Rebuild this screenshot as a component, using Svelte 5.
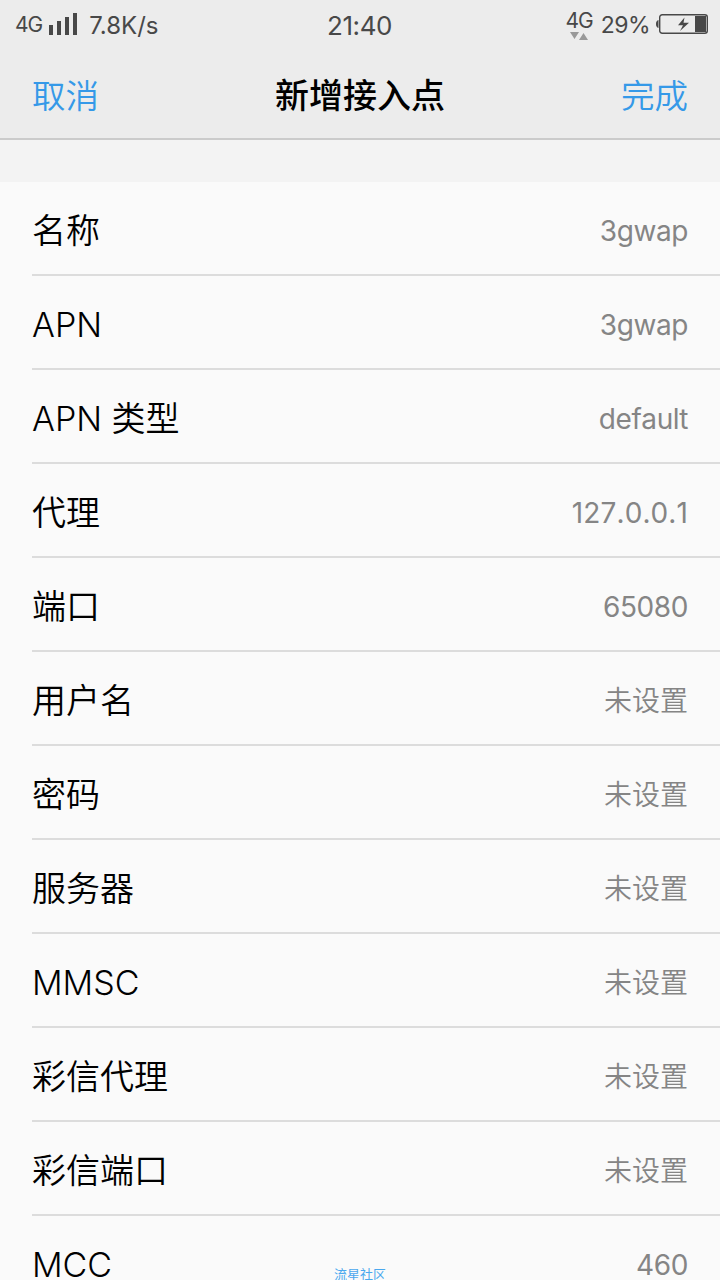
<script>
  const unset = '未设置';

  let rows = $state([
    { label: '名称', value: '3gwap' },
    { label: 'APN', value: '3gwap' },
    { label: 'APN 类型', value: 'default' },
    { label: '代理', value: '127.0.0.1', address: true },
    { label: '端口', value: '65080' },
    { label: '用户名', value: '' },
    { label: '密码', value: '' },
    { label: '服务器', value: '' },
    { label: 'MMSC', value: '' },
    { label: '彩信代理', value: '' },
    { label: '彩信端口', value: '' },
    { label: 'MCC', value: '460' }
  ]);
</script>

<div class="screen">
  <header>
    <div class="status">
      <div class="side">
        <span class="network">4G</span>
        <svg class="signal" width="28" height="22" viewBox="0 0 28 22">
          <rect x="0" y="12" width="4" height="10" />
          <rect x="8" y="8" width="4" height="14" />
          <rect x="16" y="4" width="4" height="18" />
          <rect x="24" y="0" width="4" height="22" />
        </svg>
        <span class="speed">7.8K/s</span>
      </div>
      <span class="clock">21:40</span>
      <div class="side right">
        <div class="data">
          <span class="network">4G</span>
          <svg width="18" height="8" viewBox="0 0 18 8">
            <path d="M0 0h9L4.500 7zM9 8h9L13.500 1z" />
          </svg>
        </div>
        <span class="percent">29%</span>
        <svg class="battery" width="52" height="20" viewBox="0 0 52 20">
          <path class="ink" d="M2.500 6v8C.7 13.500 0 12 0 10s.7-3.500 2.500-4z" />
          <rect class="case" x="3.700" y="0.700" width="47.600" height="18.600" rx="2.500" />
          <rect class="ink" x="39" y="2" width="11" height="16" />
          <path class="ink" d="M28.500 3.500L22 11.200h5L24 17l9-8.300h-5.500z" />
        </svg>
      </div>
    </div>
    <nav>
      <button>取消</button>
      <h1>新增接入点</h1>
      <button class="done">完成</button>
    </nav>
  </header>

  <ul>
    {#each rows as row}
      <li>
        <span class="label">{row.label}</span>
        <span class="value" class:address={row.address} class:unset={!row.value}>{row.value || unset}</span>
      </li>
    {/each}
  </ul>

  <span class="watermark">流星社区</span>
</div>

<style>
  :global(body) {
    background: #f3f3f3;
  }

  .screen {
    position: relative;
    width: 720px;
    height: 1280px;
    overflow: hidden;
    background: #f3f3f3;
    color: #000;
    font-family: Inter, 'Noto Sans CJK SC', sans-serif;
  }

  header {
    box-sizing: border-box;
    height: 140px;
    background: #ececec;
    border-bottom: 2px solid #cbcbcb;
  }

  .status {
    display: grid;
    grid-template-columns: 1fr auto 1fr;
    align-items: center;
    height: 50px;
    padding: 0 12px 0 15px;
    color: #484848;
    fill: #484848;
  }

  .side {
    display: flex;
    align-items: center;
  }

  .right {
    justify-content: flex-end;
  }

  .network {
    font-size: 21px;
    line-height: 22px;
    letter-spacing: -1px;
  }

  .signal {
    margin: -2px 12px 0 7px;
  }

  .speed {
    font-size: 24px;
  }

  .clock {
    font-size: 26px;
    letter-spacing: -0.4px;
    margin-left: -4px;
    padding-top: 1px;
  }

  .data {
    display: flex;
    flex-direction: column;
    align-items: center;
    margin: -1px 8px 0 0;
  }

  .data svg {
    fill: #999;
  }

  .percent {
    font-size: 23px;
    letter-spacing: -0.5px;
    margin-right: 6px;
  }

  .battery {
    margin-top: -2px;
  }

  .case {
    fill: none;
    stroke: #484848;
    stroke-width: 1.4;
  }

  nav {
    display: grid;
    grid-template-columns: 1fr auto 1fr;
    align-items: center;
    height: 86px;
    padding: 0 32px;
  }

  button {
    padding: 0;
    border: 0;
    background: none;
    color: #3599e8;
    font: inherit;
    font-size: 33.5px;
    font-weight: 350;
    text-align: left;
  }

  .done {
    text-align: right;
  }

  h1 {
    margin: 0;
    font-size: 34px;
    font-weight: 500;
  }

  ul {
    margin: 42px 0 0;
    padding: 0 0 0 32px;
    list-style: none;
    background: #fafafa;
  }

  li {
    box-sizing: border-box;
    display: flex;
    align-items: center;
    justify-content: space-between;
    height: 94px;
    padding: 5px 32px 0 0;
    border-bottom: 2px solid #dcdcdc;
    font-weight: 350;
    line-height: 40px;
  }

  .label {
    font-size: 34px;
  }

  .value {
    color: #858585;
    font-size: 28px;
    font-weight: 400;
    font-kerning: none;
    letter-spacing: -0.4px;
  }

  .address {
    letter-spacing: 0.1px;
  }

  .unset {
    font-weight: 350;
    letter-spacing: 0;
  }

  .watermark {
    position: absolute;
    top: 1265px;
    left: 334px;
    color: #4aa8ee;
    font-size: 13px;
    line-height: 19px;
  }
</style>
